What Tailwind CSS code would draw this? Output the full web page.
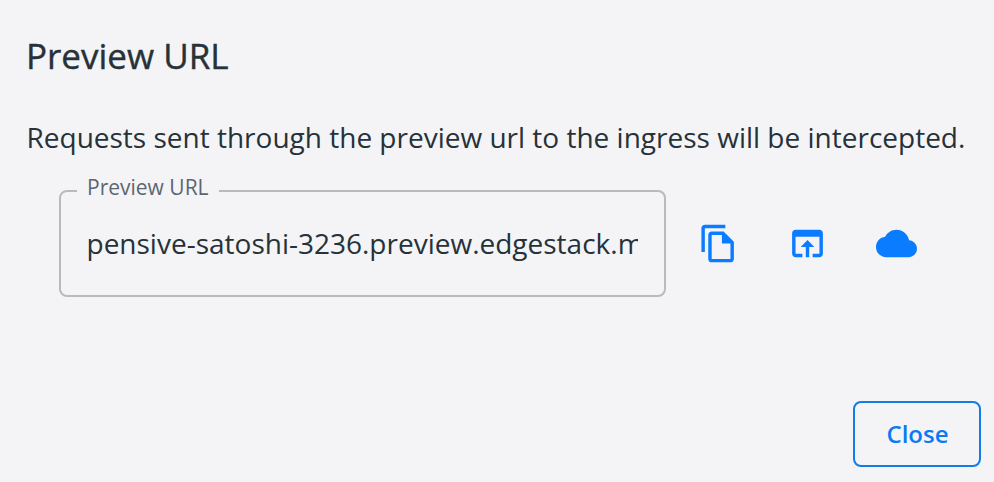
<!DOCTYPE html>
<html lang="en"><head><meta charset="utf-8"><title>Preview URL</title>
<script src="https://cdn.jsdelivr.net/npm/@tailwindcss/browser@4"></script></head>
<body class="bg-[#f4f4f7]">
<main class="w-[994px] h-[482px] overflow-hidden flex flex-col bg-[#f4f4f7] text-[#263238] font-['Open_Sans',sans-serif]">
<h1 class="pl-[26px] pt-[31px] text-[35px] leading-[50px] [-webkit-text-stroke:0.4px_#263238] whitespace-nowrap">Preview URL</h1>
<p class="pl-[26.500px] mt-[36px] text-[28px] leading-[40px] whitespace-nowrap">Requests sent through the preview url to the ingress will be intercepted.</p>
<div class="flex items-start pl-[59px] mt-[20px]">
<fieldset class="w-[607px] h-[120px] border-2 border-[#b9babd] rounded-lg px-[16px]">
<legend class="px-[10px] pb-[7px] text-[21px] leading-[21px] text-[#5c6670]">Preview URL</legend>
<div class="ml-[9.500px] w-[551px] mt-[18px] overflow-hidden whitespace-nowrap text-[28px] leading-[40px]">pensive-satoshi-3236.preview.edgestack.me</div>
</fieldset>
<div class="flex items-center mt-[46px] ml-[32px]">
<svg class="w-[41px] h-[41px]" viewBox="0 0 24 24" fill="#0a7cff"><path d="M16 1H4c-1.100 0-2 .9-2 2v14h2V3h12V1zm-1 4H8c-1.100 0-1.990.9-1.990 2L6 21c0 1.100.89 2 1.990 2H19c1.100 0 2-.9 2-2V11l-6-6zM8 21V7h6v5h5v9H8z"/></svg>
<svg class="w-[41px] h-[41px] ml-[48px]" viewBox="0 0 24 24" fill="#0a7cff"><path d="M19 4H5c-1.110 0-2 .9-2 2v12c0 1.100.89 2 2 2h4v-2H5V8h14v10h-4v2h4c1.100 0 2-.9 2-2V6c0-1.100-.89-2-2-2zm-7 6-4 4h3v6h2v-6h3l-4-4z"/></svg>
<svg class="w-[41px] h-[41px] ml-[48px]" viewBox="0 0 24 24" fill="#0a7cff"><path d="M19.350 10.040C18.670 6.590 15.640 4 12 4 9.110 4 6.600 5.640 5.350 8.040 2.340 8.360 0 10.910 0 14c0 3.310 2.690 6 6 6h13c2.760 0 5-2.240 5-5 0-2.640-2.050-4.780-4.650-4.960z"/></svg>
</div></div>
<button class="mt-auto mb-[15px] ml-[853px] w-[128px] h-[66px] shrink-0 border-2 border-[#0f7ce8] rounded-lg text-[#0a7af5] text-[24px] font-semibold pl-px">Close</button>
</main></body></html>
